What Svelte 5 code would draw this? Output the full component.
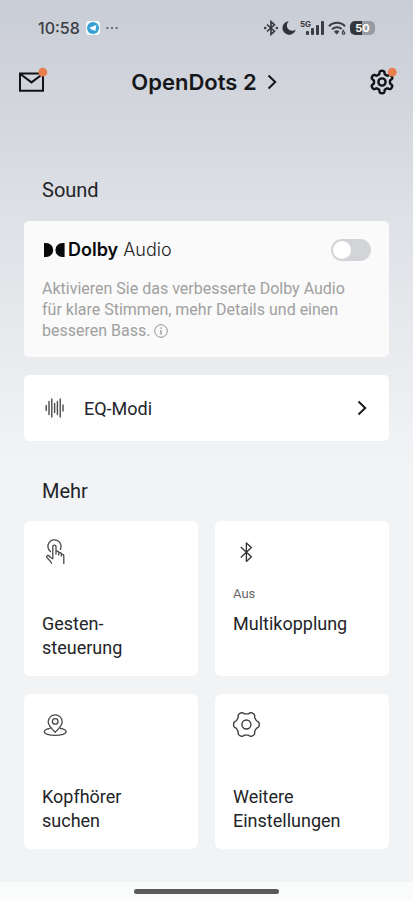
<script>
  let dolby = $state(false);

  // Closed outline of a six-toothed cog centred on the origin.
  function cog(outer, inner, start, power) {
    const points = [];
    for (let i = 0; i < 144; i++) {
      const a = (i / 144) * Math.PI * 2;
      const wave = Math.tanh(power * Math.cos(6 * (a - start))) / Math.tanh(power);
      const r = (outer + inner) / 2 + ((outer - inner) / 2) * wave;
      points.push(`${(r * Math.cos(a)).toFixed(2)} ${(r * Math.sin(a)).toFixed(2)}`);
    }
    return `M${points.join('L')}Z`;
  }
  const headerCog = cog(11.2, 8, Math.PI / 6, 2.4);
  const tileCog = cog(12.8, 10.6, 0, 2);
</script>

<div class="screen">
  <div class="status">
    <div class="left">
      <span class="time">10:58</span>
      <svg width="14" height="14" viewBox="0 0 14 14" aria-hidden="true">
        <rect width="14" height="14" rx="3" fill="#f4f9fc" />
        <circle cx="7" cy="7" r="6" fill="#379fd2" />
        <path d="M3 7 10.4 4 9.2 10.3 6.9 8.6 5.8 9.8 5.5 7.9Z" fill="#fff" />
      </svg>
      <svg width="12" height="4" viewBox="0 0 12 4" fill="#555960" aria-hidden="true">
        <circle cx="1.4" cy="2" r="1.1" /><circle cx="6" cy="2" r="1.1" /><circle cx="10.6" cy="2" r="1.1" />
      </svg>
    </div>
    <div class="right">
      <svg width="14" height="16" viewBox="0 0 14 16" fill="none" stroke="#34373d" stroke-width="1.6" aria-hidden="true">
        <path d="M3 4.5 10.5 11.2 7 14.5V1.5L10.5 4.8 3 11.5" />
        <circle cx="1.2" cy="8" r=".5" /><circle cx="12.8" cy="8" r=".5" />
      </svg>
      <svg width="14" height="14" viewBox="0 0 14 14" aria-hidden="true">
        <path d="M6.8.2A6.8 6.8 0 1 0 13.8 8.6 5 5 0 0 1 6.8.2Z" fill="#2f3238" />
      </svg>
      <div class="signal">
        <span>5G</span>
        <svg width="18" height="14" viewBox="0 0 18 14" fill="#3a3d43" aria-hidden="true">
          <rect x="0" y="10" width="3" height="4" rx="1" /><rect x="5" y="7" width="3" height="7" rx="1" />
          <rect x="10" y="4" width="3" height="10" rx="1" /><rect x="15" y="0" width="3" height="14" rx="1" />
        </svg>
      </div>
      <svg width="18" height="14" viewBox="0 0 18 14" fill="none" stroke="#3a3d43" stroke-width="2" aria-hidden="true">
        <path d="M1 5.2a11 11 0 0 1 16 0M4 8.4a7 7 0 0 1 9.6-.4" />
        <path d="M6 10.6a4 4 0 0 1 5.4 0L8.7 13.5Z" fill="#3a3d43" stroke="none" />
        <path d="M15.8 8.8 14.4 11.3" stroke-width="1.2" /><circle cx="15.5" cy="12" r="1.3" stroke-width="1.1" />
      </svg>
      <div class="battery"><span>50</span></div>
    </div>
  </div>

  <header>
    <button class="icon" aria-label="Nachrichten">
      <svg width="28" height="28" viewBox="0 0 28 28" fill="none" aria-hidden="true">
        <path d="M4 5.6H27V22.8H4ZM5 6.5 15.5 14.4 26 6.5" stroke="#111317" stroke-width="2" />
        <circle cx="26.8" cy="4.2" r="4.4" fill="#e97e4d" />
      </svg>
    </button>
    <button class="device">
      OpenDots 2
      <svg width="10" height="16" viewBox="0 0 10 16" fill="none" stroke="#15171b" stroke-width="2" aria-hidden="true"><path d="M1.5 1.5 8.2 8 1.5 14.5" /></svg>
    </button>
    <button class="icon" aria-label="Einstellungen">
      <svg width="28" height="28" viewBox="0 0 28 28" fill="none" aria-hidden="true">
        <g transform="translate(13 14)" stroke="#111317" stroke-width="2.4" stroke-linejoin="round">
          <path d={headerCog} /><circle r="3.6" />
        </g>
        <circle cx="23.2" cy="4.2" r="4.4" fill="#e97e4d" />
      </svg>
    </button>
  </header>

  <main>
    <h2>Sound</h2>
    <section class="card dolby">
      <div class="row">
        <label class="brand" for="dolby">
          <svg width="22" height="14" viewBox="0 0 22 14" fill="#08090a" aria-hidden="true">
            <path d="M2 0H4.2A7 7 0 0 1 4.2 14H2ZM22.6 0H20.4A7 7 0 0 0 20.4 14H22.6Z" />
          </svg>
          <span><b>Dolby</b> Audio</span>
        </label>
        <input id="dolby" type="checkbox" role="switch" bind:checked={dolby} />
      </div>
      <p>
        Aktivieren Sie das verbesserte Dolby Audio für klare Stimmen, mehr Details und einen besseren Bass.
        <svg width="14" height="14" viewBox="0 0 14 14" fill="none" stroke="#929292" aria-hidden="true">
          <circle cx="7" cy="7" r="6.3" /><path d="M7 6V10.4M7 3.4V4.8" stroke-width="1.3" />
        </svg>
      </p>
    </section>

    <button class="card eq">
      <svg width="20" height="20" viewBox="0 0 20 20" fill="none" stroke="#4b4b4b" stroke-width="1.4" stroke-linecap="round" aria-hidden="true">
        <path d="M1.2 7.5V12.5M4 3.5V16.5M6.8 1V19M9.6 5.5V14.5M12.4 3.5V16.5M15.2 1V19M18 7V13" />
      </svg>
      <span>EQ-Modi</span>
      <svg width="10" height="16" viewBox="0 0 10 16" fill="none" stroke="#1b1b1b" stroke-width="2" aria-hidden="true"><path d="M1.5 1.5 8.2 8 1.5 14.5" /></svg>
    </button>

    <h2 class="more">Mehr</h2>
    <div class="grid">
      <button class="card tile">
        <svg width="28" height="28" viewBox="0 0 28 28" fill="none" stroke="#484848" stroke-width="1.3" stroke-linejoin="round" stroke-linecap="round" aria-hidden="true">
          <path d="M8.4 13.6A6.6 6.6 0 1 1 18.4 11.4" />
          <path d="M9.6 25.4C8.8 22.5 4.6 20.3 4.6 18.8 4.8 16.8 7.2 17.2 8.2 19.2L10.8 20.8V8.8C10.8 6.5 14 6.5 14 8.8V16.2M14 13.2C15.8 12.7 16.8 13.6 16.8 14.8V17M16.8 14.8C18.6 14.2 19.4 15.2 19.4 16.2V18M19.4 16.2C20.8 15.9 21.8 16.7 21.8 18V25.4" />
        </svg>
        <span class="state"></span>
        <span class="name">Gesten-<br />steuerung</span>
      </button>
      <button class="card tile">
        <svg width="28" height="28" viewBox="0 0 28 28" fill="none" stroke="#333" stroke-width="1.3" stroke-linejoin="round" aria-hidden="true">
          <path d="M7.8 9 18.4 18.8 13.4 23.4V5L18.4 9.6 7.8 19.4" />
        </svg>
        <span class="state">Aus</span>
        <span class="name">Multikopplung</span>
      </button>
      <button class="card tile">
        <svg width="28" height="28" viewBox="0 0 28 28" fill="none" stroke="#484848" stroke-width="1.3" stroke-linejoin="round" aria-hidden="true">
          <path d="M13.2 21.2C9.5 17.8 6.2 14.6 6.2 10.8A7 7 0 0 1 20.2 10.8C20.2 14.6 16.9 17.8 13.2 21.2Z" />
          <circle cx="13.2" cy="10.4" r="2.8" />
          <path d="M8.4 17.4C4.6 17.9 2.3 19.2 2.3 20.8 2.3 22.8 7 24.4 13.2 24.4S24.1 22.8 24.1 20.8C24.1 19.2 21.8 17.9 18 17.4" />
        </svg>
        <span class="state"></span>
        <span class="name">Kopfhörer<br />suchen</span>
      </button>
      <button class="card tile">
        <svg width="28" height="28" viewBox="0 0 28 28" fill="none" stroke="#3d3d3d" stroke-width="1.4" stroke-linejoin="round" aria-hidden="true">
          <g transform="translate(13.4 13.5)"><path d={tileCog} /><circle r="4.5" /></g>
        </svg>
        <span class="state"></span>
        <span class="name">Weitere<br />Einstellungen</span>
      </button>
    </div>
  </main>

  <footer><div></div></footer>
</div>

<style>
  :global(body) { margin: 0; }
  .screen {
    min-height: 100vh;
    box-sizing: border-box;
    display: flex;
    flex-direction: column;
    font-family: Roboto, sans-serif;
    color: #222427;
    background: #f1f3f5 linear-gradient(#c9cdd6, #d2d5dc 100px, #dde0e5 210px, #ebecf0 370px, #f1f3f5 460px) no-repeat;
  }
  button {
    appearance: none;
    border: 0;
    background: none;
    padding: 0;
    font: inherit;
    color: inherit;
    text-align: left;
    cursor: pointer;
  }
  svg { flex: none; display: block; overflow: visible; }
  .status {
    display: flex;
    justify-content: space-between;
    align-items: center;
    height: 24px;
    padding: 16px 38px 0;
    color: #3a3d43;
  }
  .left, .right { display: flex; align-items: center; }
  .left { gap: 6px; }
  .right { gap: 4px; }
  .time { font: 500 16px/24px Inter, sans-serif; }
  .signal { display: flex; align-items: flex-end; }
  .signal span { align-self: flex-start; font: 700 8px/7px Inter, sans-serif; margin-right: -5px; }
  .battery {
    width: 25px;
    height: 14px;
    border-radius: 5px;
    background: linear-gradient(90deg, #34373c 50%, #979ba4 50%);
    color: #fff;
    font: 700 11px/14px Inter, sans-serif;
    text-align: center;
  }
  header {
    display: flex;
    justify-content: space-between;
    align-items: center;
    height: 84px;
    padding: 0 16px;
  }
  .device {
    display: flex;
    align-items: center;
    gap: 10px;
    padding-right: 5px;
    font: 600 22px/28px Inter, sans-serif;
    color: #15171b;
  }
  main { flex: 1; padding: 52px 24px 33px; }
  h2 { margin: 0 18px 17px; font-size: 20px; line-height: 28px; font-weight: 400; }
  .card { display: block; box-sizing: border-box; width: 100%; background: #fff; border-radius: 5px; }
  .dolby { background: #fafafa; padding: 17px 18px 16px; margin-bottom: 18px; }
  .row { display: flex; justify-content: space-between; align-items: center; }
  .brand {
    display: flex;
    align-items: center;
    gap: 4px;
    font: 300 18px/24px Inter, sans-serif;
    color: #222;
  }
  .brand b { font-weight: 600; color: #08090a; }
  input {
    appearance: none;
    margin: 0;
    width: 40px;
    height: 22px;
    border-radius: 11px;
    background: #d3d4d8;
    padding: 2px;
    display: flex;
  }
  input::before { content: ""; width: 18px; height: 18px; border-radius: 9px; background: #fff; }
  input:checked { background: #34373c; justify-content: flex-end; }
  p { margin: 16px 0 0; padding-right: 18px; font-size: 16px; line-height: 21px; color: #a0a0a0; }
  p svg { display: inline-block; vertical-align: -2px; }
  .eq { display: flex; align-items: center; height: 66px; padding: 0 22px 0 21px; font-size: 18px; }
  .eq span { flex: 1; margin-left: 19px; }
  .more { margin-top: 36px; margin-bottom: 16px; }
  .grid { display: grid; grid-template-columns: 1fr 1fr; gap: 18px 17px; }
  .tile {
    display: flex;
    flex-direction: column;
    align-items: flex-start;
    min-height: 155px;
    padding: 17px 18px 16px;
    border-radius: 6px;
  }
  .state { margin-top: 18px; height: 20px; font-size: 13px; line-height: 20px; color: #666; }
  .name { margin-top: 8px; font-size: 18px; line-height: 24px; }
  footer { height: 18px; background: #fafbfb; display: flex; justify-content: center; align-items: center; }
  footer div { width: 35%; height: 5px; border-radius: 3px; background: #5a5a5c; }
</style>
